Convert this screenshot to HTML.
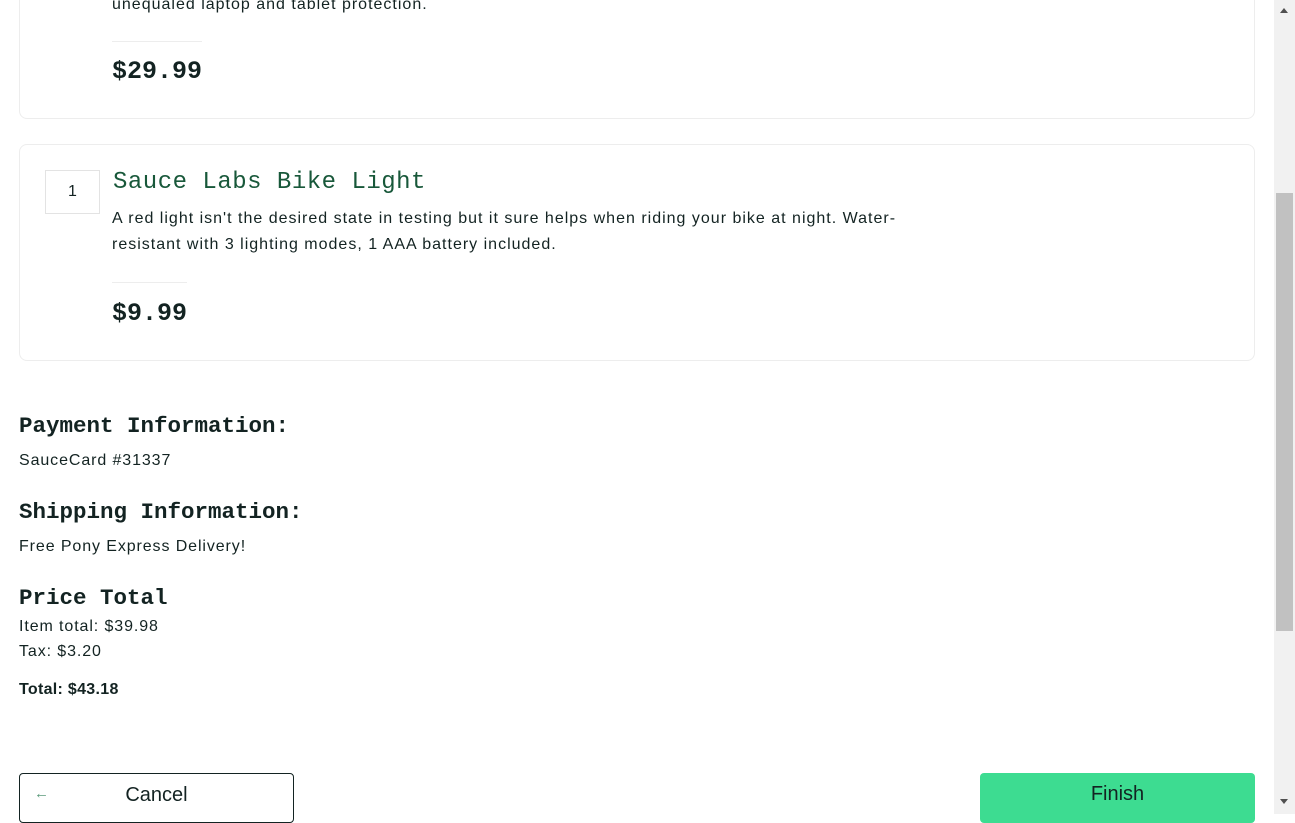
<!DOCTYPE html>
<html><head><style>
*{box-sizing:border-box;margin:0;padding:0}
body{width:1295px;height:814px;overflow:hidden;background:#fff;position:relative;font-family:"Liberation Sans",sans-serif;color:#132322}
.card{position:absolute;left:19px;width:1236px;border:1px solid #ededed;border-radius:8px}
.mono{font-family:"Liberation Mono",monospace}
.desc{position:absolute;left:112px;font-size:16px;line-height:26px;color:#132322;width:795px;letter-spacing:1px}
.div{position:absolute;left:112px;height:1px;background:#ededed}
.price{position:absolute;left:112px;font-size:25px;font-weight:bold;color:#132322}
.h{position:absolute;left:19px;font-size:22.5px;font-weight:bold;color:#132322}
.t{position:absolute;left:19px;font-size:16px;letter-spacing:0.9px}
</style></head><body>
<div class="card" style="top:-20px;height:139px"></div>
<div class="desc" style="top:-8px">unequaled laptop and tablet protection.</div>
<div class="div" style="top:41px;width:90px"></div>
<div class="price mono" style="top:57px">$29.99</div>

<div class="card" style="top:144px;height:217px"></div>
<div style="position:absolute;left:45px;top:170px;width:55px;height:44px;border:1px solid #e3e3e3;font-size:16px;text-align:center;line-height:42px;color:#132322">1</div>
<div class="mono" style="position:absolute;left:113px;top:169px;font-size:24px;color:#18583a;letter-spacing:0.5px">Sauce Labs Bike Light</div>
<div class="desc" style="top:206px">A red light isn't the desired state in testing but it sure helps when riding your bike at night. Water-resistant with 3 lighting modes, 1 AAA battery included.</div>
<div class="div" style="top:282px;width:75px"></div>
<div class="price mono" style="top:299px">$9.99</div>

<div class="h mono" style="top:413px">Payment Information:</div>
<div class="t" style="top:452px">SauceCard #31337</div>
<div class="h mono" style="top:499px">Shipping Information:</div>
<div class="t" style="top:538px">Free Pony Express Delivery!</div>
<div class="h mono" style="top:585px">Price Total</div>
<div class="t" style="top:618px">Item total: $39.98</div>
<div class="t" style="top:643px">Tax: $3.20</div>
<div class="t" style="top:681px;font-weight:bold;letter-spacing:0.3px">Total: $43.18</div>

<div style="position:absolute;left:19px;top:773px;width:275px;height:50px;border:1px solid #132322;border-radius:4px;font-size:20px;text-align:center;line-height:42px">Cancel
<span style="position:absolute;left:14px;top:-1px;color:#5a9a7a;font-size:15px">&larr;</span></div>
<div style="position:absolute;left:980px;top:773px;width:275px;height:50px;background:#3ddc91;border-radius:4px;font-size:20px;text-align:center;line-height:42px">Finish</div>

<div style="position:absolute;left:1274px;top:0;width:21px;height:814px;background:#f1f1f1"></div>
<div style="position:absolute;left:1276px;top:193px;width:17px;height:438px;background:#c1c1c1"></div>
<div style="position:absolute;left:1280px;top:8px;width:0;height:0;border-left:4px solid transparent;border-right:4px solid transparent;border-bottom:5px solid #505050"></div>
<div style="position:absolute;left:1280px;top:799px;width:0;height:0;border-left:4px solid transparent;border-right:4px solid transparent;border-top:5px solid #505050"></div>
</body></html>
